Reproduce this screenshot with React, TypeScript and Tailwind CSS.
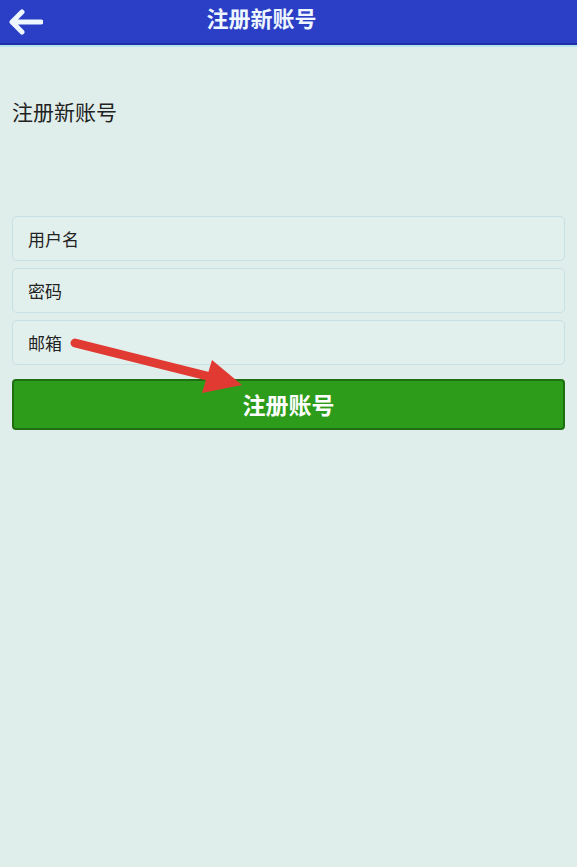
import React from "react";

export default function App() {
  const font = { fontFamily: '"Noto Sans CJK SC", "Noto Sans", sans-serif' };
  return (
    <div className="relative min-h-[867px] w-full bg-[#e0eeeb]" style={font}>
      <div className="relative flex h-[45px] items-start justify-center bg-[#2b3fc6] border-b-2 border-[#1f2fa8] shadow-[0_2px_0_#b6e4ee]">
        <div className="absolute left-[7px] top-[9px]">
          <svg width="36" height="26" viewBox="0 0 36 26">
            <path d="M34 13 H6 M15 3 L5 13 L15 23" stroke="#eef6ff" strokeWidth="5" fill="none" strokeLinecap="round" strokeLinejoin="round" />
          </svg>
        </div>
        <span className="mr-[54px] pt-[6px] text-[22px] font-bold text-[#eef6ff] leading-none">注册新账号</span>
      </div>
      <div className="px-[12px]">
        <div className="pt-[56px] text-[21px] text-[#222] leading-none">注册新账号</div>
        <div className="mt-[94px] flex flex-col gap-[7px]">
          {["用户名", "密码", "邮箱"].map((t) => (
            <div key={t} className="flex h-[45px] items-center rounded-[5px] border border-[#c7e0e2] bg-[#e2f0ed] pl-[15px] text-[17px] text-[#222]">
              {t}
            </div>
          ))}
        </div>
        <div className="mt-[14px] flex h-[51px] items-center justify-center rounded-[4px] border-2 border-[#1e6e12] bg-[#2c9c1a] text-[23px] font-bold text-white">
          注册账号
        </div>
      </div>
      <svg className="absolute left-0 top-0" width="577" height="440" viewBox="0 0 577 440">
        <line x1="75" y1="343" x2="215" y2="378" stroke="#e03a32" strokeWidth="9" strokeLinecap="round" />
        <polygon points="212,360 242,385 202,393" fill="#e03a32" />
      </svg>
    </div>
  );
}
